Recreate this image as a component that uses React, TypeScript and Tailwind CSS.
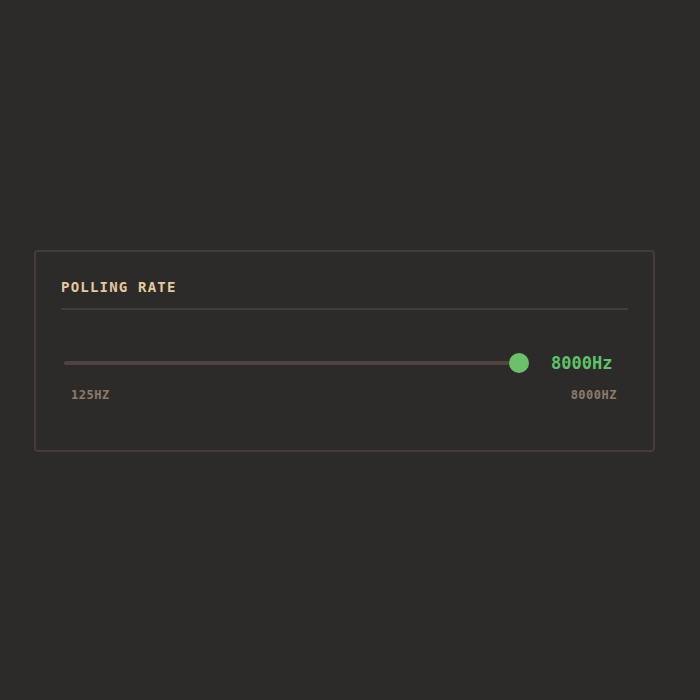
import { useState } from "react";

const MIN = 125;
const MAX = 8000;

const PollingRate: React.FC = () => {
  const [rate] = useState(8000);
  const pct = ((rate - MIN) / (MAX - MIN)) * 100;

  return (
    <div className="w-[621px] ml-[34px] rounded-[4px] border-2 border-[#463b38] bg-[#2d2b29] px-[25px] pt-[25px] pb-[47px]">
      <h2 className="font-['DejaVu_Sans_Mono',monospace] font-bold text-[14px] leading-[20px] tracking-[1.2px] text-[#e3caa0]">
        POLLING RATE
      </h2>
      <div className="mt-[11px] h-[2px] bg-[#463b38]" />

      <div className="mt-[42px] flex items-center pl-[3px]">
        <div className="relative h-[4px] flex-1 rounded-full bg-[#4f4540]">
          <div
            className="absolute top-1/2 h-[20px] w-[20px] -translate-x-1/2 -translate-y-1/2 rounded-full bg-[#6cc06c]"
            style={{ left: `${pct}%` }}
          />
        </div>
        <span className="ml-[32px] w-[77px] font-['DejaVu_Sans_Mono',monospace] font-bold text-[17px] leading-[22px] text-[#5fc26a]">
          {rate}Hz
        </span>
      </div>

      <div className="mt-[13px] flex justify-between pl-[10px] pr-[11px] font-['DejaVu_Sans_Mono',monospace] font-bold text-[12px] leading-[16px] tracking-[0.5px] text-[#8c7b6b]">
        <span>125HZ</span>
        <span>8000HZ</span>
      </div>
    </div>
  );
};

export default function App() {
  return (
    <div className="min-h-[700px] w-full bg-[#2d2b29] pt-[250px]">
      <PollingRate />
    </div>
  );
}
